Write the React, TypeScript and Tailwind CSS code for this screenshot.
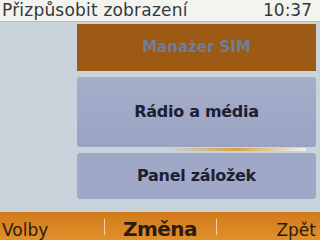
export default function App() {
  return (
    <div
      className="w-[320px] h-[240px] flex flex-col bg-[#c8d3dc] overflow-hidden"
      style={{ fontFamily: '"DejaVu Sans", "Noto Sans", sans-serif' }}
    >
      <div className="h-[22px] flex items-center justify-between px-[2px] bg-[#f4f4ef] border-b border-[#c9b89a] text-[#33383e] text-[17px] leading-none">
        <span className="tracking-[0.2px]">Přizpůsobit zobrazení</span>
        <span className="pr-[6px]">10:37</span>
      </div>
      <div className="flex-1 flex flex-col pl-[77px] pr-[4px] pt-[2px] gap-[6px]">
        <div className="h-[47px] bg-[#9c5a14] flex items-center justify-center text-[#6f7d9c] font-bold text-[15px]">
          Manažer SIM
        </div>
        <div className="relative h-[70px] rounded-[3px] bg-gradient-to-b from-[#a4aecb] to-[#9aa4c2] flex items-center justify-center text-[#1c2030] font-bold text-[16px] tracking-[-0.3px]">
          Rádio a média
          <div className="absolute left-[90px] right-[10px] bottom-[-4px] h-[3px] bg-gradient-to-r from-transparent via-[#d9a23c] to-[#eef0f0]" />
        </div>
        <div className="h-[46px] rounded-[3px] bg-[#9fa8c6] flex items-center justify-center text-[#1c2030] font-bold text-[16px] tracking-[-0.3px]">
          Panel záložek
        </div>
      </div>
      <div className="h-[28px] bg-gradient-to-b from-[#d27a1c] to-[#e0902a] flex items-end justify-between text-[#2a1c10] text-[17px] leading-none pb-[1px]">
        <span className="pl-[2px] w-[100px]">Volby</span>
        <span className="w-[1px] h-[16px] bg-[#f2d2a8] mb-[4px]" />
        <span className="font-bold text-[20px] w-[104px] text-center tracking-[-0.5px]">Změna</span>
        <span className="w-[1px] h-[16px] bg-[#f2d2a8] mb-[4px]" />
        <span className="w-[100px] text-right pr-[4px]">Zpět</span>
      </div>
    </div>
  );
}
